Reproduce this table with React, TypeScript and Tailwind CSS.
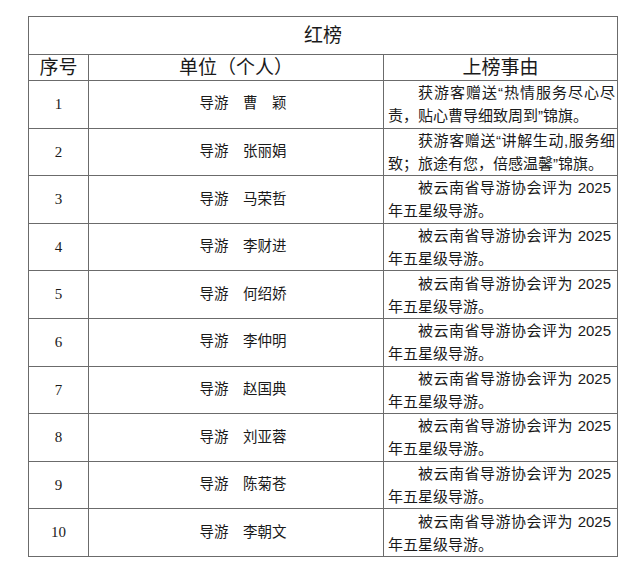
import React from "react";

const rows: { n: string; name: string; reason: string }[] = [
  { n: "1", name: "导游　曹　颖", reason: "获游客赠送“热情服务尽心尽责，贴心曹导细致周到”锦旗。" },
  { n: "2", name: "导游　张丽娟", reason: "获游客赠送“讲解生动,服务细致；旅途有您，倍感温馨”锦旗。" },
  { n: "3", name: "导游　马荣哲", reason: "被云南省导游协会评为 2025 年五星级导游。" },
  { n: "4", name: "导游　李财进", reason: "被云南省导游协会评为 2025 年五星级导游。" },
  { n: "5", name: "导游　何绍娇", reason: "被云南省导游协会评为 2025 年五星级导游。" },
  { n: "6", name: "导游　李仲明", reason: "被云南省导游协会评为 2025 年五星级导游。" },
  { n: "7", name: "导游　赵国典", reason: "被云南省导游协会评为 2025 年五星级导游。" },
  { n: "8", name: "导游　刘亚蓉", reason: "被云南省导游协会评为 2025 年五星级导游。" },
  { n: "9", name: "导游　陈菊苍", reason: "被云南省导游协会评为 2025 年五星级导游。" },
  { n: "10", name: "导游　李朝文", reason: "被云南省导游协会评为 2025 年五星级导游。" },
];

const cjk = "font-['Liberation_Sans','Noto_Sans_CJK_SC',sans-serif]";

export default function App() {
  return (
    <div className={`w-[640px] h-[579px] bg-white pt-[16px] pl-[28px] text-[#1a1a1a] ${cjk}`}>
      <table className="border-collapse w-[589px] table-fixed">
        <colgroup>
          <col className="w-[60px]" />
          <col className="w-[295px]" />
          <col className="w-[234px]" />
        </colgroup>
        <tbody>
          <tr className="h-[38px]">
            <td colSpan={3} className="border border-[#6b6b6b] text-center text-[19px] leading-none p-0">
              红榜
            </td>
          </tr>
          <tr className="h-[26px]">
            <td className="border border-[#6b6b6b] text-center text-[19px] leading-none p-0">序号</td>
            <td className="border border-[#6b6b6b] text-center text-[19px] leading-none p-0">单位（个人）</td>
            <td className="border border-[#6b6b6b] text-center text-[19px] leading-none p-0">上榜事由</td>
          </tr>
          {rows.map((r, i) => (
            <tr key={r.n} className="h-[47.6px]">
              <td className="border border-[#6b6b6b] text-center text-[15px] p-0 font-['Liberation_Serif',serif]">
                {r.n}
              </td>
              <td className="border border-[#6b6b6b] text-center text-[14.5px] p-0 pl-[14px] whitespace-pre">
                {r.name}
              </td>
              <td
                className={`border border-[#6b6b6b] text-[15px] leading-[23px] pl-[4px] py-0 text-justify indent-[2em] ${
                  i < 2 ? "pr-[2px]" : "pr-[6px]"
                }`}
              >
                {r.reason}
              </td>
            </tr>
          ))}
        </tbody>
      </table>
    </div>
  );
}
